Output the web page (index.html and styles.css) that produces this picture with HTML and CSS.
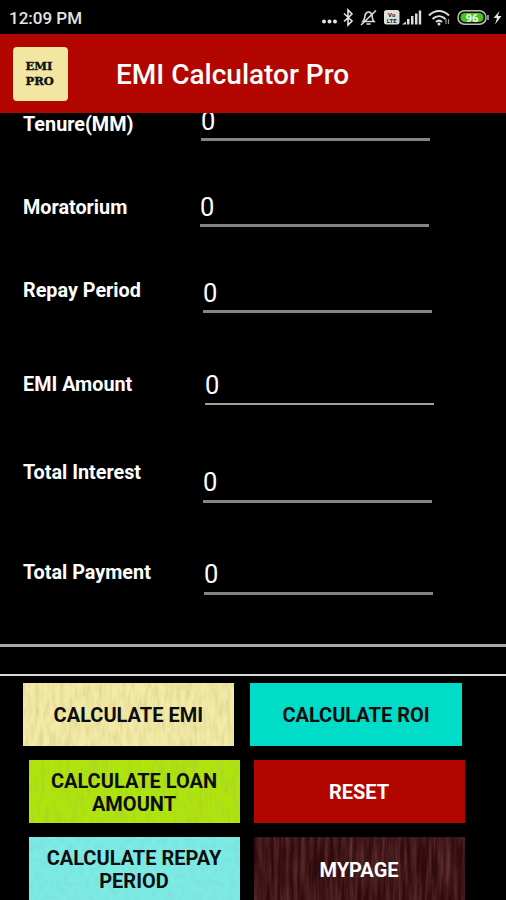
FILE: index.html
```html
<!DOCTYPE html>
<html lang="en">
<head>
  <meta charset="UTF-8">
  <meta name="viewport" content="width=device-width, initial-scale=1.0">
  <title>EMI Calculator Pro</title>
  <link rel="stylesheet" href="styles.css">
</head>
<body>
  <!-- wood grain filters for the buttons -->
  <svg class="defs" width="0" height="0">
    <filter id="grain-light" x="0" y="0" width="100%" height="100%">
      <feTurbulence type="fractalNoise" baseFrequency="0.24 0.06" numOctaves="3" seed="4"/>
      <feColorMatrix values="0 0 0 0 0.4  0 0 0 0 0.4  0 0 0 0 0.1  0.6 0 0 0 -0.22"/>
    </filter>
    <filter id="grain-soft" x="0" y="0" width="100%" height="100%">
      <feTurbulence type="fractalNoise" baseFrequency="0.18 0.14" numOctaves="3" seed="2"/>
      <feColorMatrix values="0 0 0 0 0.2  0 0 0 0 0.6  0 0 0 0 0.6  0.7 0 0 0 -0.27"/>
    </filter>
    <filter id="grain-dark" x="0" y="0" width="100%" height="100%">
      <feTurbulence type="fractalNoise" baseFrequency="0.25 0.02" numOctaves="3" seed="9"/>
      <feColorMatrix values="0 0 0 0 0.4  0 0 0 0 0.15  0 0 0 0 0.15  0.7 0 0 0 -0.22"/>
    </filter>
  </svg>

  <div class="status-bar">
    <span class="time">12:09 PM</span>
    <svg class="status-icons" width="186" height="24" viewBox="0 0 186 24">
      <g fill="#e4e4e4">
        <circle cx="4" cy="15.500" r="2"/>
        <circle cx="9.500" cy="15.500" r="2"/>
        <circle cx="15" cy="15.500" r="2"/>
      </g>
      <!-- bluetooth -->
      <path d="M24 7.500l8 7.500-4 4V4l4 4-8 7.500" fill="none" stroke="#e4e4e4" stroke-width="1.600"/>
      <!-- muted bell -->
      <g fill="none" stroke="#dcdcdc" stroke-width="1.600">
        <path d="M43 15.500c2-2 1.500-4 2-6 .7-2.500 2-3.500 3.500-3.500s3 1 3.500 3.500c.4 2 0 4 2 6zM46.500 18h4"/>
        <path d="M41 19L56 4.500"/>
      </g>
      <!-- volte -->
      <rect x="64" y="4" width="15.500" height="14.500" rx="2.500" fill="#dedede"/>
      <text class="volte" x="71.700" y="11">Vo</text>
      <text class="volte" x="71.700" y="17">LTE</text>
      <!-- signal -->
      <g fill="#dcdcdc">
        <path d="M82 18.500l4-3v3z"/>
        <rect x="87" y="13" width="2.500" height="5.500"/>
        <rect x="91" y="10" width="2.500" height="8.500"/>
        <rect x="95" y="7.500" width="2.500" height="11"/>
        <rect x="98.800" y="4.500" width="2.400" height="14"/>
      </g>
      <!-- wifi -->
      <g fill="none" stroke="#dcdcdc" stroke-width="2">
        <path d="M109 9.500c6-6 14-6 20 0"/>
        <path d="M112.500 13c4-3.800 9-3.800 13 0"/>
        <path d="M116 16c2-1.800 4-1.800 6 0"/>
        <path d="M126 13v5M128.500 13v5" stroke-width="1.200" stroke="#999"/>
      </g>
      <circle cx="119" cy="18" r="1.500" fill="#dcdcdc"/>
      <!-- battery -->
      <rect x="138" y="4.700" width="28" height="13.600" rx="6.500" fill="#111" stroke="#bdbdbd" stroke-width="1.500"/>
      <rect x="140.500" y="7" width="23" height="9" rx="4.500" fill="#48c51c"/>
      <path d="M168 9v5" stroke="#bdbdbd" stroke-width="1.500"/>
      <text class="battery" x="152" y="15.500">96</text>
      <path d="M179.500 5l-6 7h3.500l-2 6.500 6.500-8.500h-3.700z" fill="#e4e4e4"/>
    </svg>
  </div>

  <header class="app-bar">
    <div class="logo">EMI<br>PRO</div>
    <h1>EMI Calculator Pro</h1>
  </header>

  <main class="form">
    <div class="row tenure">
      <label>Tenure(MM)</label>
      <div class="field">0</div>
    </div>
    <div class="row moratorium">
      <label>Moratorium</label>
      <div class="field">0</div>
    </div>
    <div class="row repay">
      <label>Repay Period</label>
      <div class="field">0</div>
    </div>
    <div class="row emi">
      <label>EMI Amount</label>
      <div class="field">0</div>
    </div>
    <div class="row interest">
      <label>Total Interest</label>
      <div class="field">0</div>
    </div>
    <div class="row payment">
      <label>Total Payment</label>
      <div class="field">0</div>
    </div>
  </main>

  <div class="divider"></div>

  <div class="buttons">
    <div class="button-row first">
      <button class="btn cream"><svg class="grain"><rect width="100%" height="100%" filter="url(#grain-light)"/></svg><span>CALCULATE EMI</span></button>
      <button class="btn teal"><span>CALCULATE ROI</span></button>
    </div>
    <div class="button-row">
      <button class="btn lime"><svg class="grain"><rect width="100%" height="100%" filter="url(#grain-light)"/></svg><span>CALCULATE LOAN<br>AMOUNT</span></button>
      <button class="btn red"><span>RESET</span></button>
    </div>
    <div class="button-row">
      <button class="btn sky"><svg class="grain"><rect width="100%" height="100%" filter="url(#grain-soft)"/></svg><span>CALCULATE REPAY<br>PERIOD</span></button>
      <button class="btn wood"><svg class="grain"><rect width="100%" height="100%" filter="url(#grain-dark)"/></svg><span>MYPAGE</span></button>
    </div>
  </div>
</body>
</html>
```
FILE: styles.css
```css
* {
  box-sizing: border-box;
}

body {
  margin: 0;
  height: 900px;
  background-color: #000;
  color: #fff;
  font-family: Roboto, "Liberation Sans", sans-serif;
  display: flex;
  flex-direction: column;
  overflow: hidden;
}

.defs {
  position: absolute;
}

.status-bar {
  height: 34px;
  flex: none;
  padding: 6px 0 0 9px;
  display: flex;
  justify-content: space-between;
}

.time {
  font-size: 17px;
  font-weight: 500;
  line-height: 25px;
  color: #e4e4e4;
}

.status-icons {
  flex: none;
}

.volte {
  font-size: 6px;
  font-weight: 700;
  text-anchor: middle;
  fill: #222;
}

.battery {
  font-size: 11px;
  font-weight: 700;
  text-anchor: middle;
  fill: #fff;
}

.app-bar {
  height: 79px;
  flex: none;
  background-color: #b30600;
  display: flex;
  align-items: center;
  padding: 0 13px 0 12.5px;
}

.logo {
  width: 55px;
  height: 54px;
  border-radius: 4px;
  background-color: #f2e6a2;
  color: #111;
  font-family: "DejaVu Serif", serif;
  font-size: 11.5px;
  font-weight: 700;
  line-height: 14.5px;
  padding: 12.5px 0 0 13px;
  -webkit-text-stroke: 0.4px #111;
}

.app-bar h1 {
  margin: 3px 0 0 48.5px;
  font-size: 28px;
  font-weight: 500;
  line-height: 34px;
  white-space: nowrap;
}

.form {
  height: 530px;
  flex: none;
  overflow: hidden;
}

.row {
  display: flex;
  align-items: flex-end;
  padding-left: 23px;
}

.row label {
  width: 178px;
  font-size: 19.8px;
  font-weight: 700;
  line-height: 24px;
  white-space: nowrap;
}

.field {
  width: 228.5px;
  height: 40px;
  border-bottom: 3px solid #858585;
  font-size: 25.5px;
  line-height: 41px;
}

.tenure { height: 28px; }
.tenure label { margin-bottom: 4px; }
.moratorium { height: 86px; }
.moratorium label { width: 177px; margin-bottom: 7px; }
.repay { height: 86px; }
.repay label { width: 180px; margin-bottom: 10px; }
.emi { height: 92px; }
.emi label { width: 182px; margin-bottom: 8px; }
.emi .field { border-bottom: 2px solid #a0a0a0; }
.interest { height: 98px; }
.interest label { width: 180px; margin-bottom: 18px; }
.interest .field { line-height: 39px; }
.payment { height: 92px; }
.payment label { width: 181px; margin-bottom: 10px; }
.payment .field { line-height: 39px; }

.divider {
  height: 32px;
  flex: none;
  margin-top: 1px;
  border-top: 3px solid #a8a8a8;
  border-bottom: 2px solid #d8d8d8;
  margin-bottom: 6.5px;
}

.buttons {
  display: flex;
  flex-direction: column;
  gap: 14px;
}

.button-row {
  display: flex;
  gap: 14px;
  padding-left: 28.5px;
}

.button-row.first {
  gap: 16px;
  padding-left: 22.5px;
}

.btn {
  position: relative;
  flex: none;
  width: 211px;
  height: 63.3px;
  padding: 3px 0 0;
  border: none;
  font-family: inherit;
  font-size: 20px;
  font-weight: 700;
  line-height: 23px;
  color: #0d0d0d;
}

.first .btn {
  width: 211.7px;
  padding-top: 2px;
}

.btn span {
  position: relative;
}

.grain {
  position: absolute;
  top: 0;
  left: 0;
  width: 100%;
  height: 100%;
}

.cream { background-color: #f4eaa8; }
.teal { background-color: #00dcc8; }
.lime { background-color: #aee60c; }
.red { background-color: #b30600; color: #fff; }
.sky { background-color: #7cebe4; }
.wood { background-color: #300a0c; color: #fff; }
```
